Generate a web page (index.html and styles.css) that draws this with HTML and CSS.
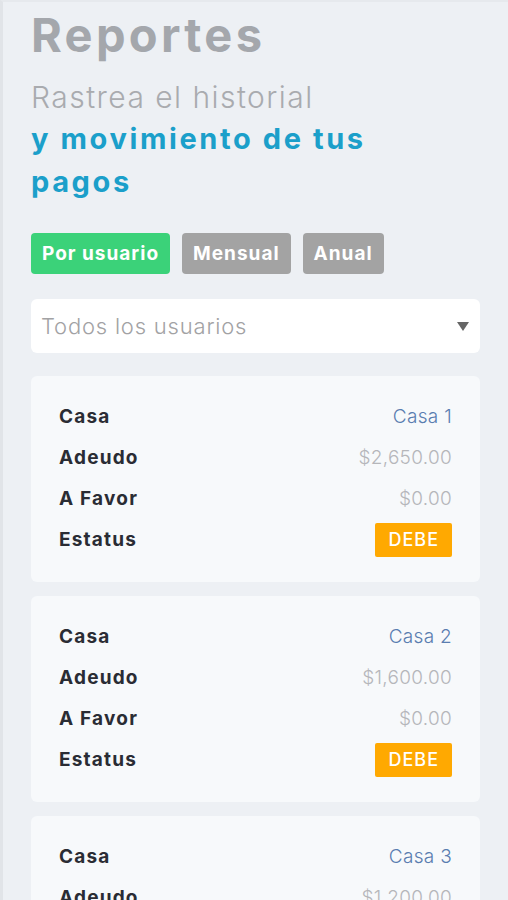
FILE: index.html
```html
<!DOCTYPE html>
<html lang="es">
<head>
    <meta charset="UTF-8">
    <meta name="viewport" content="width=device-width, initial-scale=1.0">
    <title>Reportes</title>
    <link rel="stylesheet" href="styles.css">
</head>
<body>
    <div class="page">
        <h1 class="title">Reportes</h1>
        <p class="subtitle">Rastrea el historial</p>
        <p class="subtitle-strong">y movimiento de tus pagos</p>

        <div class="tabs">
            <a class="tab active" href="#">Por usuario</a>
            <a class="tab" href="#">Mensual</a>
            <a class="tab" href="#">Anual</a>
        </div>

        <div class="select">
            <span>Todos los usuarios</span>
            <span class="caret"></span>
        </div>

        <div class="card">
            <div class="row"><span class="label">Casa</span><span class="house">Casa 1</span></div>
            <div class="row"><span class="label">Adeudo</span><span class="amount">$2,650.00</span></div>
            <div class="row"><span class="label">A Favor</span><span class="amount">$0.00</span></div>
            <div class="row"><span class="label">Estatus</span><span class="badge">DEBE</span></div>
        </div>

        <div class="card">
            <div class="row"><span class="label">Casa</span><span class="house">Casa 2</span></div>
            <div class="row"><span class="label">Adeudo</span><span class="amount">$1,600.00</span></div>
            <div class="row"><span class="label">A Favor</span><span class="amount">$0.00</span></div>
            <div class="row"><span class="label">Estatus</span><span class="badge">DEBE</span></div>
        </div>

        <div class="card">
            <div class="row"><span class="label">Casa</span><span class="house">Casa 3</span></div>
            <div class="row"><span class="label">Adeudo</span><span class="amount">$1,200.00</span></div>
            <div class="row"><span class="label">A Favor</span><span class="amount">$0.00</span></div>
            <div class="row"><span class="label">Estatus</span><span class="badge">DEBE</span></div>
        </div>
    </div>
</body>
</html>
```

FILE: styles.css
```css
body {
    margin: 0;
    font-family: Inter, 'DejaVu Sans', sans-serif;
    background-color: #edf0f4;
    border-left: 3px solid #e1e4e8;
    border-top: 2px solid #e6e9ed;
    min-height: 100vh;
}

.page {
    padding: 0 28px 20px 28px;
}

/* titulo y subtitulos */
.title {
    margin: 0;
    padding-top: 3px;
    font-size: 47px;
    font-weight: 700;
    letter-spacing: 3.3px;
    color: #a4a7ac;
    line-height: 60px;
}

.subtitle {
    margin: 12px 0 0 0;
    font-size: 30px;
    font-weight: 300;
    letter-spacing: 1.45px;
    color: #a9abaf;
    line-height: 40px;
}

.subtitle-strong {
    margin: 0;
    font-size: 29px;
    font-weight: 700;
    letter-spacing: 2.6px;
    color: #1b9fca;
    line-height: 43px;
    width: 370px;
}

/* pestañas */
.tabs {
    display: flex;
    gap: 12px;
    margin-top: 30px;
}

.tab {
    display: block;
    height: 41px;
    line-height: 41px;
    padding: 0 11px;
    border-radius: 4px;
    background-color: #a3a3a3;
    color: #ffffff;
    font-size: 19px;
    font-weight: 700;
    letter-spacing: 1px;
    text-decoration: none;
}

.tab.active {
    background-color: #3bd279;
}

.select {
    display: flex;
    align-items: center;
    justify-content: space-between;
    height: 54px;
    margin-top: 25px;
    padding: 0 11px 0 10px;
    background-color: #ffffff;
    border-radius: 6px;
    font-size: 22px;
    font-weight: 300;
    letter-spacing: 0.8px;
    color: #a2a2a4;
}

.caret {
    width: 0;
    height: 0;
    border-left: 6px solid transparent;
    border-right: 6px solid transparent;
    border-top: 9px solid #666666;
}

/* tarjetas */
.card {
    margin-top: 23px;
    padding: 20px 28px 22px 28px;
    background-color: #f7f9fb;
    border-radius: 6px;
}

.card + .card {
    margin-top: 14px;
}

.row {
    display: flex;
    justify-content: space-between;
    align-items: center;
    height: 41px;
}

.label {
    font-size: 19px;
    font-weight: 700;
    letter-spacing: 1.2px;
    color: #2a2c34;
}

.house {
    font-size: 19px;
    font-weight: 300;
    letter-spacing: 0.3px;
    color: #5a7db0;
}

.amount {
    font-size: 19px;
    font-weight: 300;
    letter-spacing: 0.3px;
    color: #b5b6ba;
}

.badge {
    padding: 0 13px;
    height: 34px;
    line-height: 34px;
    background-color: #ffa901;
    border-radius: 2px;
    color: #ffffff;
    font-size: 18px;
    font-weight: 500;
    letter-spacing: 1px;
}
```
